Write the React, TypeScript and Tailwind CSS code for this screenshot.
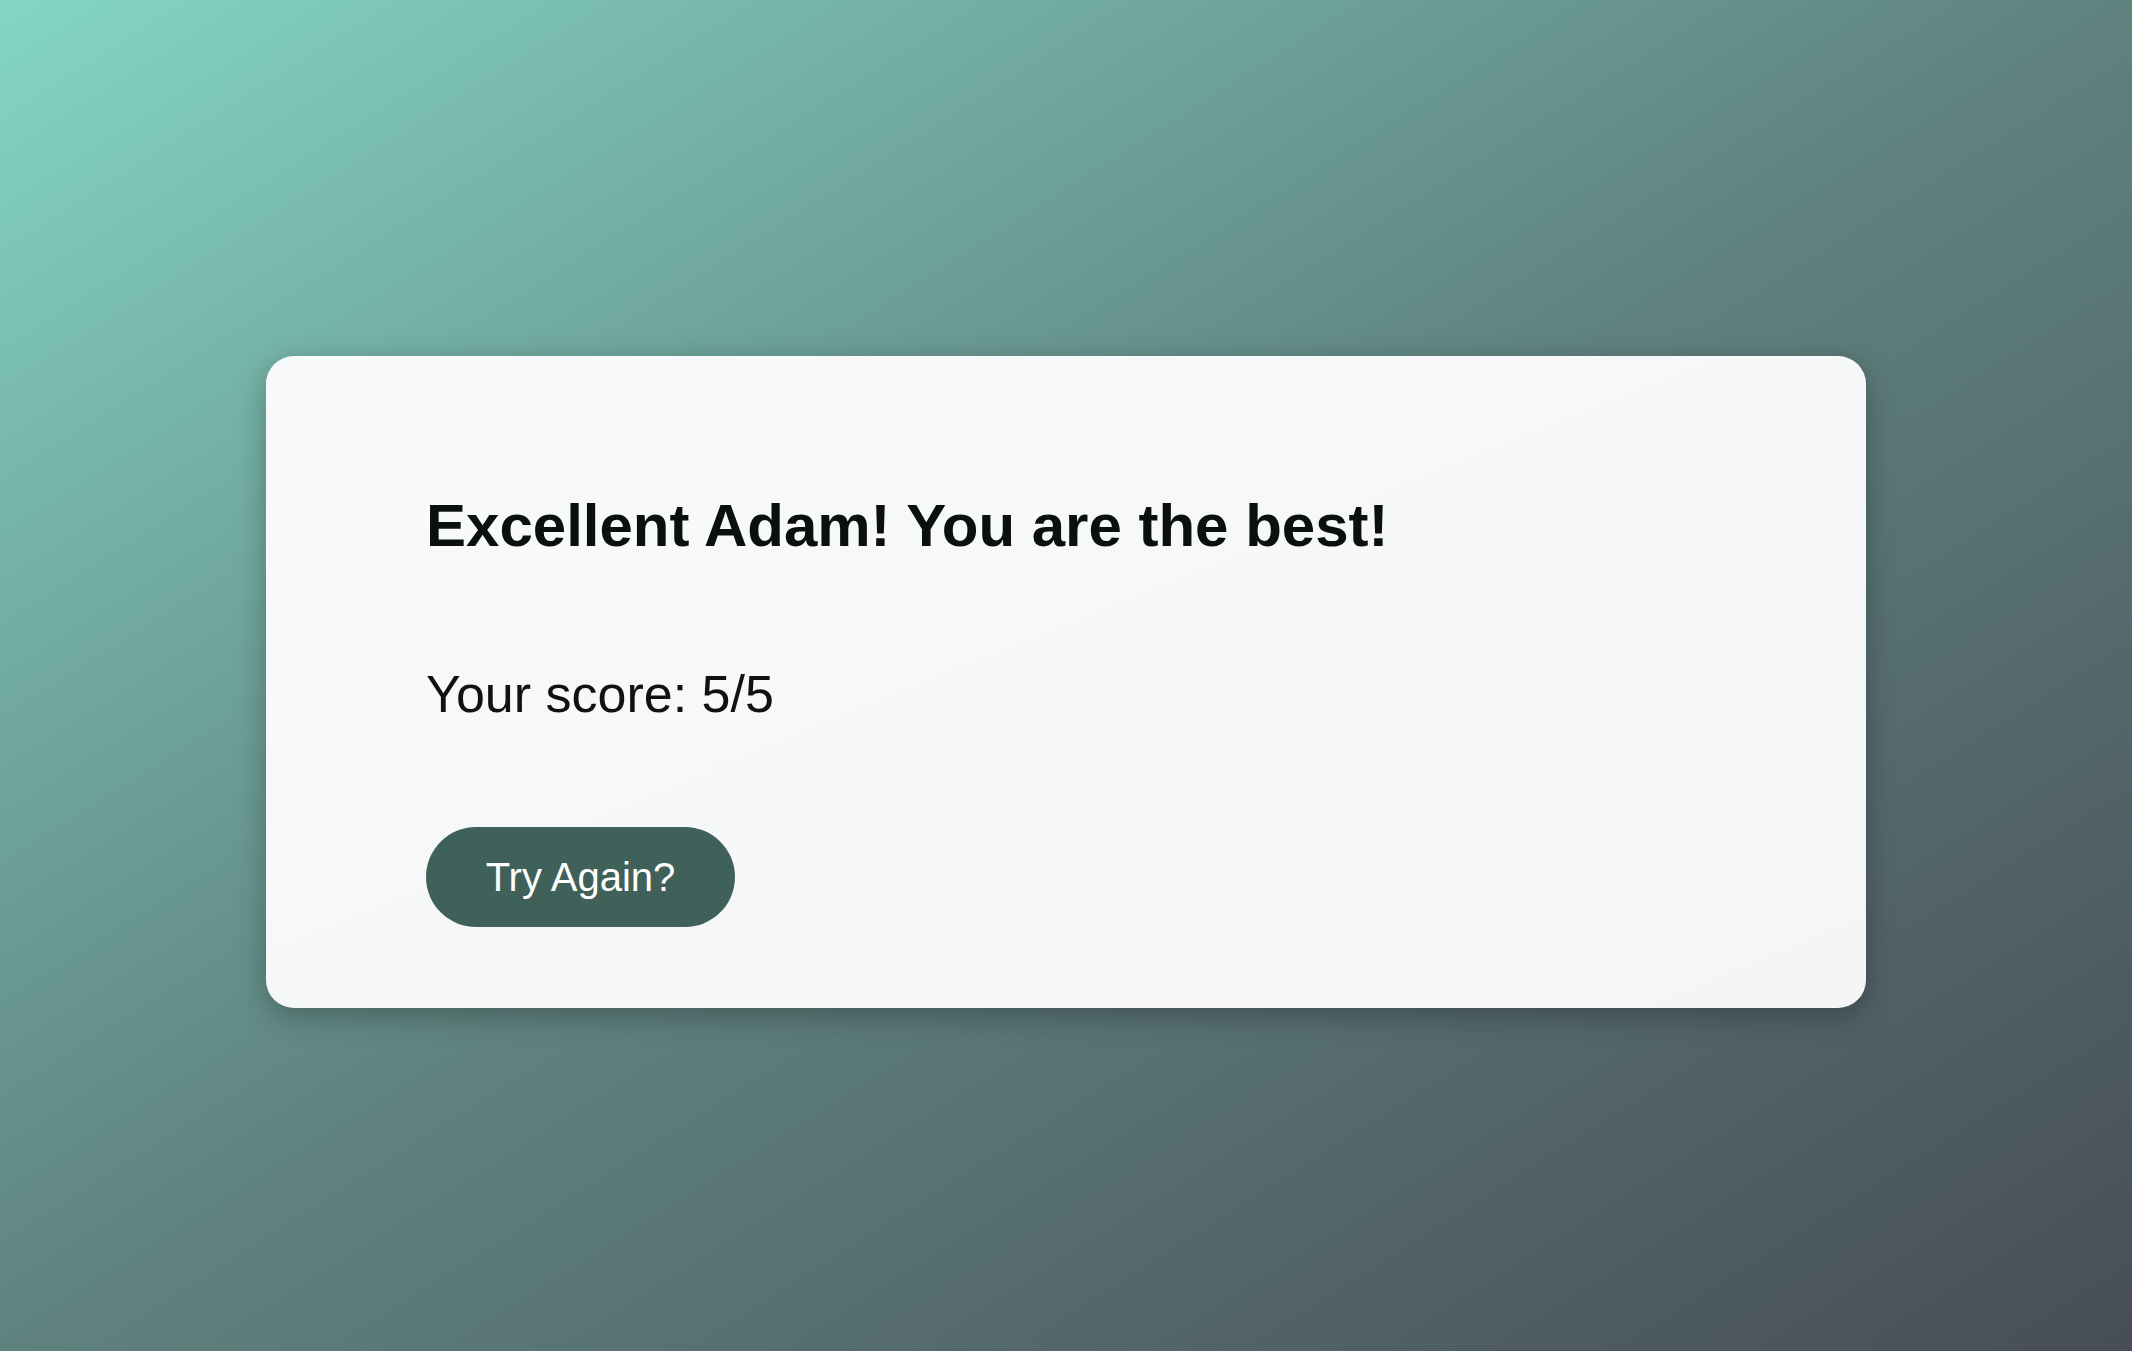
export default function App() {
  return (
    <div className="min-h-screen w-full flex items-center justify-center pt-[12px] bg-gradient-to-br from-[#84d6c4] via-[#5f827f] to-[#474d57] font-['Liberation_Sans',Arial,sans-serif]">
      <div className="w-[1600px] h-[652px] rounded-[28px] bg-gradient-to-br from-[#f8fafb] to-[#f4f5f6] shadow-[0_8px_30px_rgba(0,0,0,0.28)] pl-[160px] pt-[135px] pb-[80px] flex flex-col items-start">
        <h1 className="text-[60px] leading-[1.15] font-bold text-[#0b0f0e]">
          Excellent Adam! You are the best!
        </h1>
        <p className="mt-[105px] text-[52px] leading-[1.15] text-[#111]">Your score: 5/5</p>
        <button className="mt-[103px] h-[100px] w-[309px] rounded-full bg-[#3f6159] text-white text-[40px] leading-none">
          Try Again?
        </button>
      </div>
    </div>
  );
}
